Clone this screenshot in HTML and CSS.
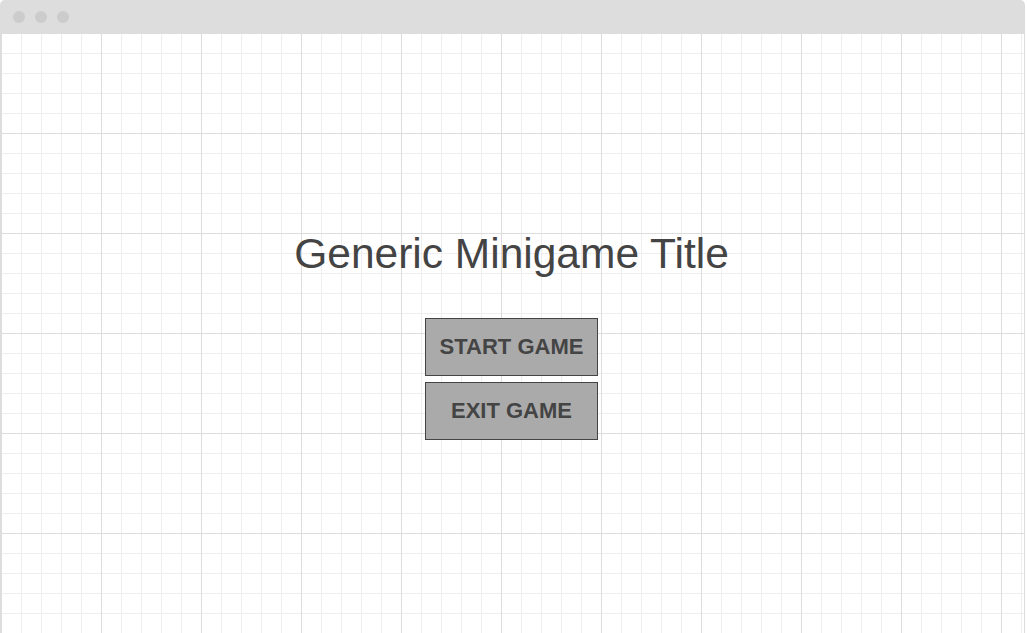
FILE: index.html
```html
<!DOCTYPE html>
<html lang="en">
<head>
<meta charset="utf-8">
<title>Generic Minigame Title</title>
<link rel="stylesheet" href="styles.css">
</head>
<body>
<div class="window">
  <div class="titlebar">
    <span class="dot"></span>
    <span class="dot"></span>
    <span class="dot"></span>
  </div>
  <main class="canvas">
    <h1 class="title">Generic Minigame Title</h1>
    <div class="menu">
      <button class="btn" type="button">START GAME</button>
      <button class="btn" type="button">EXIT GAME</button>
    </div>
  </main>
</div>
</body>
</html>
```
FILE: styles.css
```css
html, body {
  margin: 0;
  padding: 0;
  background: #ffffff;
  height: 100%;
  overflow: hidden;
}

.window {
  width: 1025px;
  height: 633px;
  box-sizing: border-box;
  display: flex;
  flex-direction: column;
}

.titlebar {
  height: 33px;
  flex: 0 0 33px;
  background: #dddddd;
  border-radius: 5px 5px 0 0;
  display: flex;
  align-items: center;
  gap: 10px;
  padding-left: 13px;
  box-sizing: border-box;
}

.dot {
  width: 12px;
  height: 12px;
  border-radius: 50%;
  background: #cccccc;
}

.canvas {
  flex: 1;
  border-left: 1px solid #dddddd;
  border-right: 1px solid #dddddd;
  background-color: #ffffff;
  background-image:
    linear-gradient(to right, #dddddd 1px, transparent 1px),
    linear-gradient(to bottom, #dddddd 1px, transparent 1px),
    linear-gradient(to right, #eeeeee 1px, transparent 1px),
    linear-gradient(to bottom, #eeeeee 1px, transparent 1px);
  background-size: 100px 100px, 100px 100px, 20px 20px, 20px 20px;
  display: flex;
  flex-direction: column;
  align-items: center;
  padding-top: 197px;
  padding-right: 2px;
  box-sizing: border-box;
}

.title {
  margin: 0;
  font-family: "Liberation Sans", Arial, sans-serif;
  font-weight: normal;
  font-size: 42.5px;
  line-height: 47px;
  color: #444444;
}

.menu {
  margin-top: 41px;
  display: flex;
  flex-direction: column;
  gap: 6px;
}

.btn {
  width: 173px;
  height: 58px;
  box-sizing: border-box;
  border: 1px solid #444444;
  border-radius: 0;
  background: #aaaaaa;
  color: #444444;
  font-family: "Liberation Sans", Arial, sans-serif;
  font-weight: bold;
  font-size: 22px;
  padding: 0;
  margin: 0;
}
```
